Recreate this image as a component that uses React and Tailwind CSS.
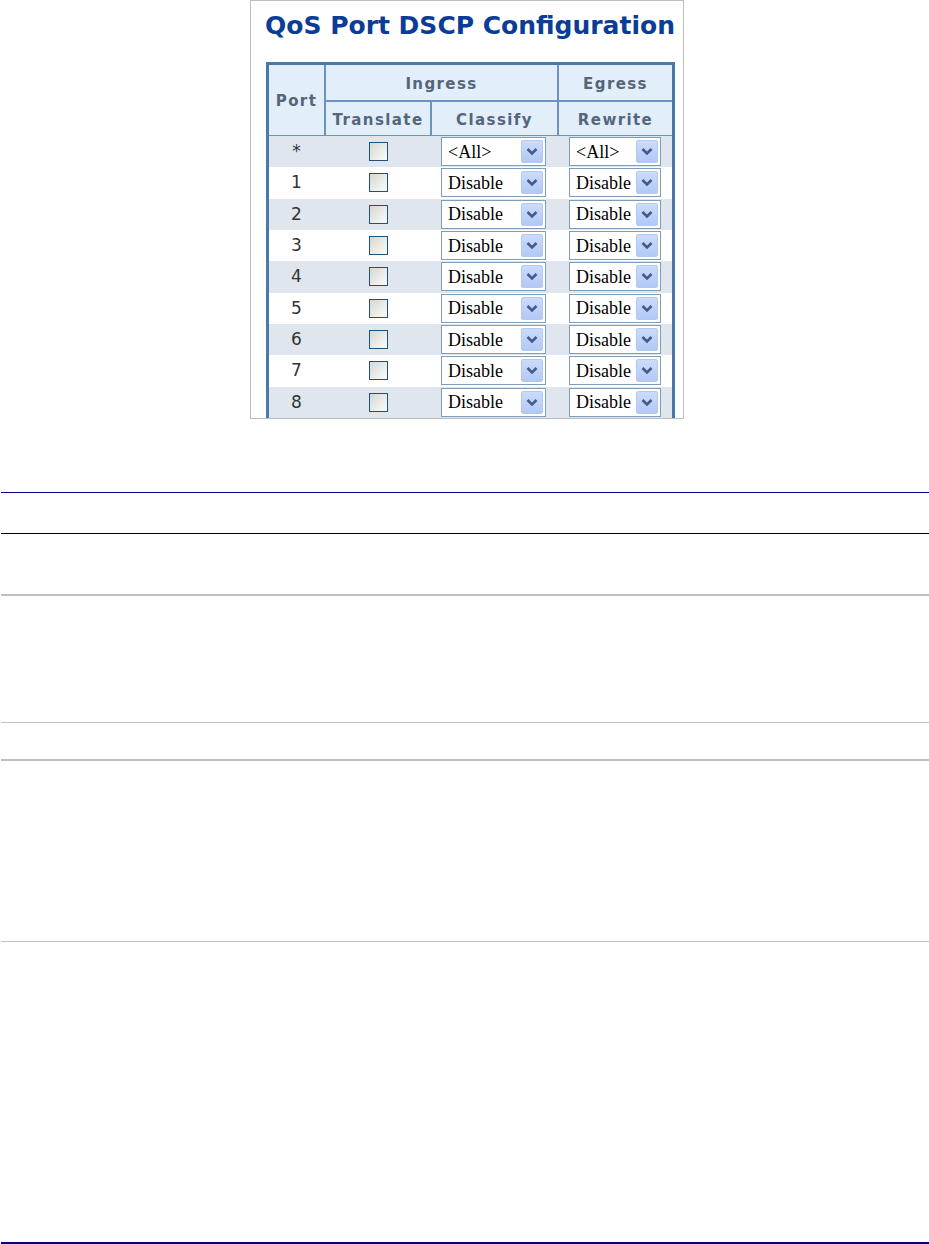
import React from "react"

const ports = ["*", "1", "2", "3", "4", "5", "6", "7", "8"]

function Chevron() {
  return <svg width="12" height="9" viewBox="0 0 12 9">
    <polyline points="1.5,2 6,6.5 10.5,2" fill="none" stroke="#45598a" strokeWidth="2.6"/>
  </svg>
}

function Select({value, width}) {
  return <div className={"relative h-[29px] border border-[#7f9db9] bg-white flex items-center " + width}>
    <span className="pl-[6px] text-[18px] leading-none text-black" style={{fontFamily: '"Liberation Serif", serif'}}>{value}</span>
    <div className="absolute right-[2px] top-[2px] bottom-[2px] w-[22px] rounded-[2px] border border-[#b3c9f1] bg-gradient-to-b from-[#cbdcfb] to-[#b2c9f5] flex items-center justify-center">
      <Chevron/>
    </div>
  </div>
}

function Checkbox() {
  return <div className="w-[19px] h-[19px] border border-[#1c5180] bg-gradient-to-br from-[#d8d8d2] to-[#fbfbf8]"/>
}

function DataRow({port, index}) {
  const bg = index % 2 === 0 ? "bg-[#dfe6ee]" : "bg-white"
  const all = port === "*"
  return <div className={"flex h-[31.33px] items-center " + bg}>
    <div className="w-[55px] text-center text-[17px] text-[#333]">{port}</div>
    <div className="w-[108px] flex justify-center"><Checkbox/></div>
    <div className="w-[127px] pl-[9px]"><Select value={all ? "<All>" : "Disable"} width="w-[105px]"/></div>
    <div className="w-[113px] pl-[10px]"><Select value={all ? "<All>" : "Disable"} width="w-[92px]"/></div>
  </div>
}

function HeaderCell({children, className = ""}) {
  return <div className={"bg-[#e3eefb] flex items-center justify-center pt-[3px] text-[15px] font-bold tracking-[1.4px] text-[#55657a] " + className}>
    {children}
  </div>
}

function App() {
  return <div className="w-[929px] h-[1244px] bg-white flex flex-col" style={{fontFamily: '"DejaVu Sans", Verdana, sans-serif'}}>
    <div className="ml-[250px] w-[434px] h-[419px] border border-[#bcbcbc] overflow-hidden pt-[10px]">
      <div className="pl-[14px] h-[30px] leading-[30px] text-[25px] font-bold text-[#0b3d96] whitespace-nowrap">
        QoS Port DSCP Configuration
      </div>
      <div className="ml-[15px] mt-[21px] w-[409px] border-[3px] border-[#4a78a8]">
        <div className="grid grid-cols-[55px_104px_125px_113px] grid-rows-[35px_33px] gap-[2px] bg-[#6a93bf] border-b border-[#6a93bf]">
          <HeaderCell className="row-span-2">Port</HeaderCell>
          <HeaderCell className="col-span-2">Ingress</HeaderCell>
          <HeaderCell>Egress</HeaderCell>
          <HeaderCell>Translate</HeaderCell>
          <HeaderCell>Classify</HeaderCell>
          <HeaderCell>Rewrite</HeaderCell>
        </div>
        {ports.map((p, i) => <DataRow key={p} port={p} index={i}/>)}
      </div>
    </div>
    <div className="ml-px mt-[73px] h-px bg-[#000080]"/>
    <div className="ml-px mt-[40px] h-px bg-black"/>
    <div className="ml-px mt-[60px] h-[2px] bg-[#c0c0c0]"/>
    <div className="ml-px mt-[126px] h-px bg-[#c0c0c0]"/>
    <div className="ml-px mt-[36px] h-[2px] bg-[#c0c0c0]"/>
    <div className="ml-px mt-[180px] h-px bg-[#c0c0c0]"/>
    <div className="ml-px mt-[300px] h-[2px] bg-[#000080]"/>
  </div>
}

export default App
